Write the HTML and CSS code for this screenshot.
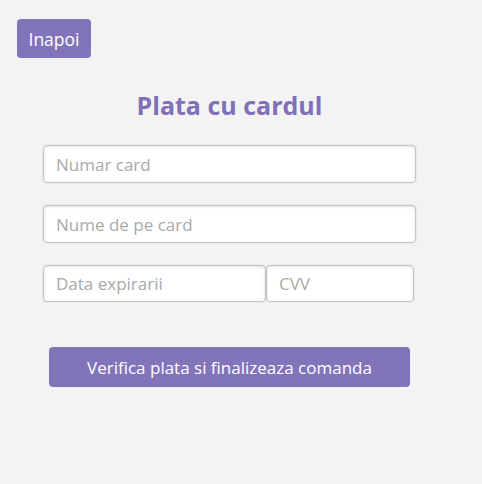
FILE: index.html
```html
<!DOCTYPE html>
<html lang="ro">
<head>
<meta charset="utf-8">
<link rel="stylesheet" href="styles.css">
</head>
<body>
<div class="page">
  <button class="back">Inapoi</button>
  <form class="card-form">
    <h1 class="title">Plata cu cardul</h1>
    <input class="field" type="text" placeholder="Numar card">
    <input class="field" type="text" placeholder="Nume de pe card">
    <div class="row">
      <input class="field exp" type="text" placeholder="Data expirarii">
      <input class="field cvv" type="text" placeholder="CVV">
    </div>
    <button class="submit" type="button">Verifica plata si finalizeaza comanda</button>
  </form>
</div>
</body>
</html>
```
FILE: styles.css
```css
html, body {
  margin: 0;
  padding: 0;
  background: #f3f3f3;
  font-family: "Open Sans", "Noto Sans", sans-serif;
}
.page {
  width: 482px;
  height: 484px;
  padding: 19px 0 0 17px;
  box-sizing: border-box;
}
.back {
  display: block;
  width: 74px;
  height: 39px;
  background: #8174b9;
  color: #fff;
  border: none;
  border-radius: 4px;
  font-family: inherit;
  font-size: 17.5px;
  padding: 0;
}
.card-form {
  width: 373px;
  margin: 0 0 0 26px;
  display: flex;
  flex-direction: column;
  align-items: stretch;
}
.title {
  margin: 31px 0 0 0;
  height: 32px;
  line-height: 32px;
  text-align: center;
  font-size: 25px;
  font-weight: 700;
  color: #7f70b9;
}
.field {
  height: 38px;
  box-sizing: border-box;
  border: 1px solid #c6c6c6;
  border-radius: 4px;
  background: #fff;
  box-shadow: inset 0 1px 3px rgba(0,0,0,0.12), 0 0 0 1px rgba(0,0,0,0.04);
  padding: 0 12px;
  font-family: inherit;
  font-size: 17px;
  color: #333;
  margin-top: 22px;
}
.title + .field { margin-top: 24px; }
.field::placeholder { color: #a9a9a9; }
.row {
  display: flex;
  margin-top: 22px;
}
.row .field { margin-top: 0; height: 37px; }
.exp { width: 223px; }
.cvv { width: 148px; }
.submit {
  align-self: flex-start;
  width: 361px;
  height: 40px;
  margin: 45px 0 0 6px;
  background: #8174b9;
  color: #fff;
  border: none;
  border-radius: 4px;
  font-family: inherit;
  font-size: 17px;
  padding: 0;
}
```
